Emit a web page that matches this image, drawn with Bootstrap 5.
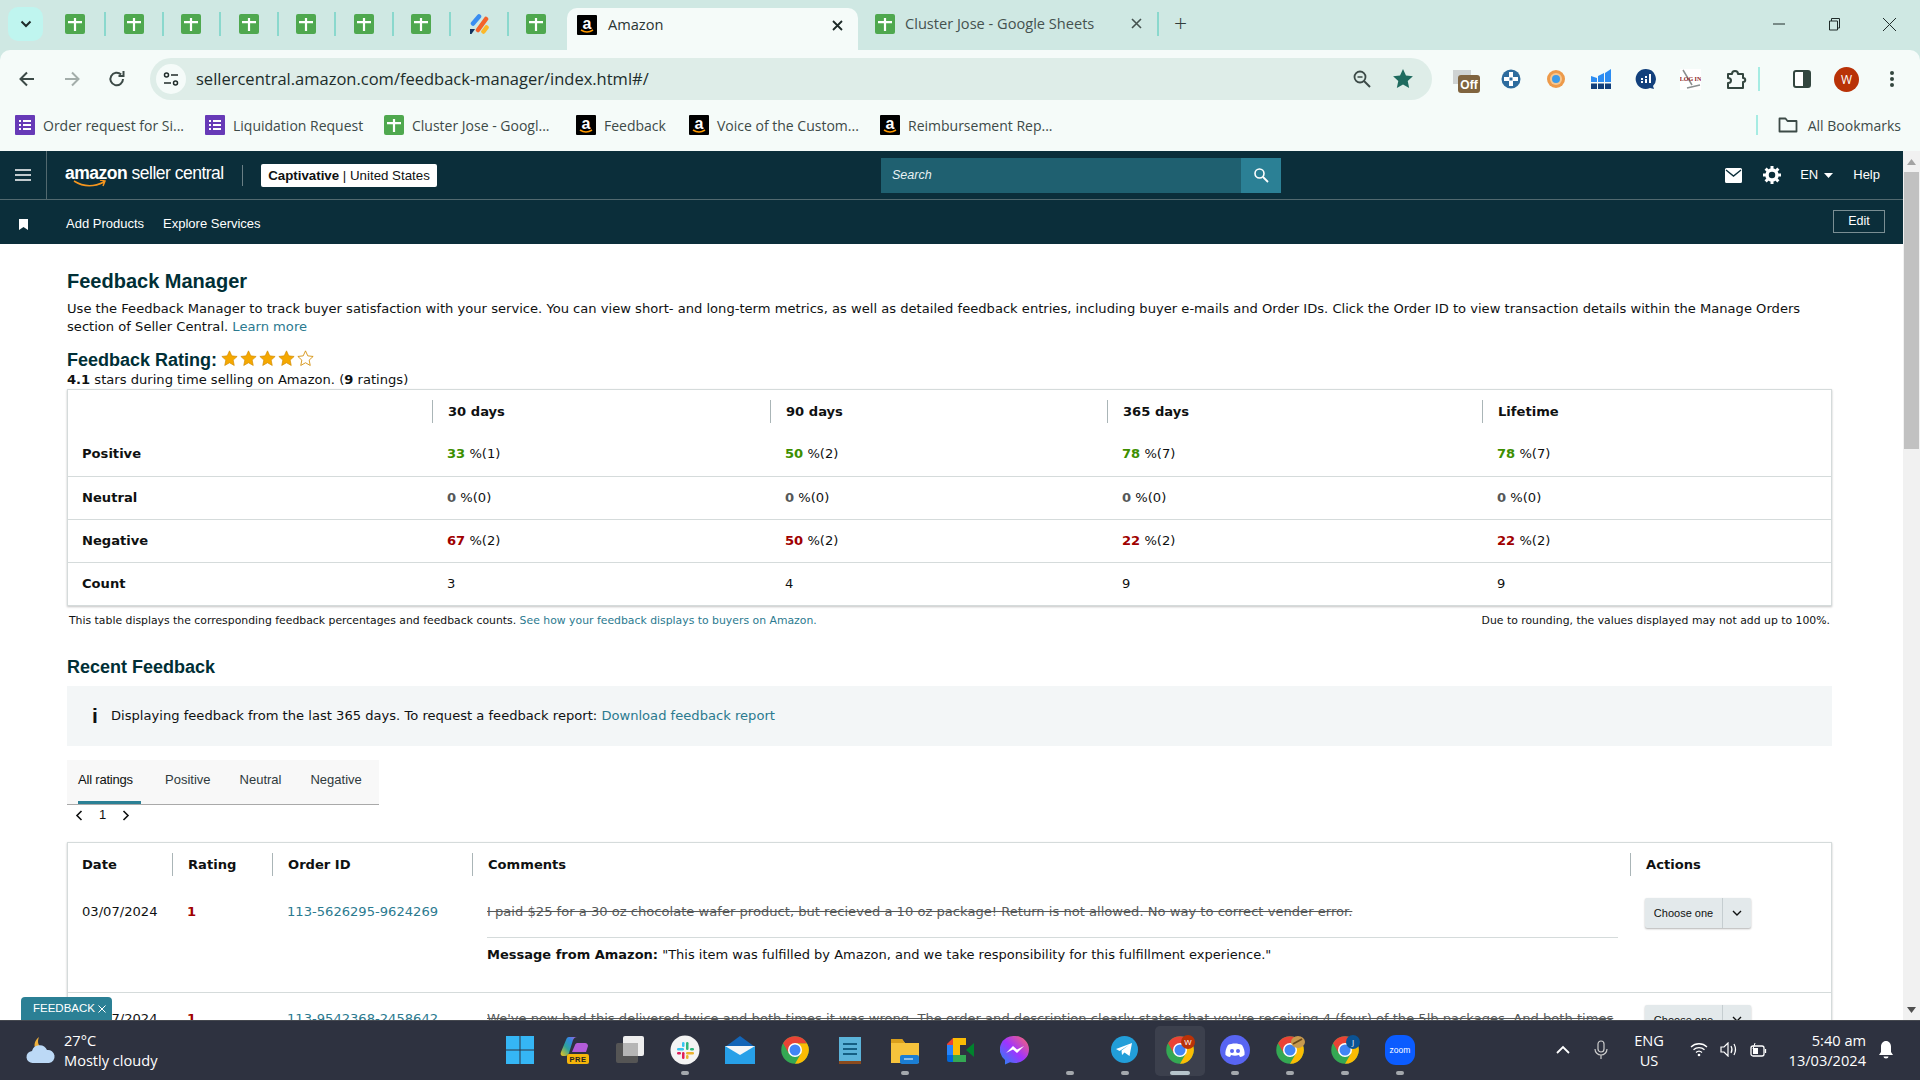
<!DOCTYPE html>
<html lang="en">
<head>
<meta charset="utf-8">
<title>Amazon</title>
<link href="https://cdn.jsdelivr.net/npm/bootstrap@5.3.0/dist/css/bootstrap.min.css" rel="stylesheet">
<style>
html,body{height:100%;margin:0;overflow:hidden}
body{font-family:"DejaVu Sans",sans-serif;font-size:13.1px;color:#0f1111;background:#fff}
.ui{font-family:"Open Sans","Noto Sans",sans-serif}
.shell{height:1080px;width:1920px;display:flex;flex-direction:column}
/* tab strip */
.tabstrip{height:50px;background:#cfe8e3;display:flex;align-items:center;flex:none}
.tabchev{width:35px;height:34px;margin-left:8px;margin-top:-2px;background:#bff5ef;border-radius:10px;display:flex;align-items:center;justify-content:center}
.pins{display:flex;margin-left:3.5px;margin-top:-2px}
.pin{width:57.5px;height:24px;display:flex;align-items:center;justify-content:center;position:relative}
.pin+.pin{border-left:2px solid #8ad8cd}
.acttab{width:291px;height:42px;margin-left:3px;margin-top:8px;background:#f5fbf9;border-radius:10px 10px 0 0;display:flex;align-items:center;padding:0 15px 8px 10px;font-size:14.6px;color:#2a3533}
.acttab span{flex:1;margin-left:11px}
.othertab{width:300px;display:flex;align-items:center;padding-left:17px;font-size:14.6px;color:#45524f;margin-top:-2px}
.othertab span{margin-left:10px;flex:1}
.tabsep{width:2px;height:24px;background:#8ad8cd;margin-top:-2px;margin-left:-1px}
.newtab{font-size:23px;line-height:1;margin-left:15px;margin-top:-4px;color:#303c3a;font-weight:300}
.winctl{margin-left:auto;display:flex;align-items:center;margin-top:-2px;padding-right:23px;gap:41px}
/* toolbar */
.toolbar{height:58px;background:#f5fbf9;display:flex;align-items:center;flex:none;border-radius:10px 10px 0 0;position:relative;padding-left:17px}
.chromebg{background:#cfe8e3;flex:none}
.tbtn{width:45px;display:flex;justify-content:flex-start}
.addr{width:1282px;height:42px;margin-left:-2px;background:#deede8;border-radius:21px;display:flex;align-items:center;padding:0 18px 0 6px}
.siteic{width:30px;height:30px;border-radius:50%;background:#f5fbf9;display:flex;align-items:center;justify-content:center}
.url{font-size:16.5px;margin-left:10px;color:#202c2a;flex:1}
.exts{display:flex;align-items:center;margin-left:11px}
.ext{width:45px;display:flex;justify-content:center;align-items:center}
.vsep{width:2px;height:24px;background:#a6ece3}
.panelx{margin-left:19px}
/* bookmarks */
.bmarks{height:43px;background:#f5fbf9;display:flex;align-items:center;padding:0 0 9px 15px;flex:none;font-size:14px;color:#3d4a48}
.bm{display:flex;align-items:center;gap:8px}
.bm1{width:190px}.bm2{width:179px}.bm3{width:192px}.bm4{width:113px}.bm5{width:191px}
.bmend{margin-left:auto;display:flex;align-items:center;padding-right:19px}
.bmend .vsep{height:20px;margin-right:20px}
.bmend svg{margin-right:10px}
/* page area: seller nav, content and the scrollbar that runs beside both */
.pagerow{flex:1;display:flex;min-height:0;overflow:hidden;position:relative}
.pagecol{flex:1;min-width:0;display:flex;flex-direction:column}
.snav1{height:49px;background:#0b2e3a;border-bottom:1px solid #52696f;display:flex;align-items:center;color:#fff;flex:none}
.snav2{height:44px;background:#0b2e3a;display:flex;align-items:center;color:#fff;flex:none;font-family:"Liberation Sans",Arial,sans-serif;font-size:13px;padding:3px 18px 0 0}
.burger{width:47px;height:48px;border-right:1px solid #52696f;display:flex;align-items:center;justify-content:center;flex:none;margin-right:18px}
.logo{position:relative;width:159px;font-family:"Liberation Sans",Arial,sans-serif;font-size:17.5px;line-height:22px;letter-spacing:-.5px;margin-top:-4px;white-space:nowrap}
.logo b{font-weight:700}
.smile{position:absolute;left:8px;top:18px}
.logosep{width:1px;height:21px;background:#6a7f85;margin:0 18px}
.acct{background:#fff;color:#0f1111;border-radius:2px;width:176px;height:23px;line-height:23px;text-align:center;font-family:"Liberation Sans",Arial,sans-serif;font-size:13.3px;white-space:nowrap}
.acct b{font-weight:700}
.srch{margin-left:444px;width:400px;height:35px;background:#1f6070;display:flex;align-items:center;padding-left:11px;font-family:"Liberation Sans",Arial,sans-serif;font-style:italic;font-size:12.5px;color:#e8f2f4}
.srch span{flex:1}
.srchbtn{width:40px;height:35px;background:#2b8095;display:flex;align-items:center;justify-content:center}
.navr{display:flex;align-items:center;margin-left:auto;font-family:"Liberation Sans",Arial,sans-serif;font-size:13px;padding-right:23px}
.gapmail{margin-right:21px}.gapgear{margin-right:19px}.gapcaret{margin:0 20px 0 6px}
.bmkic{width:66px;padding-left:19px;flex:none}
.gapadd{margin-right:19px}
.editb{margin-left:auto;width:52px;height:23px;margin-top:-4px;border:1px solid #7a8e93;line-height:21px;text-align:center;font-size:12.5px;color:#fff}
/* main */
.content{flex:1;min-height:0;padding:25px 71px 0 67px;overflow:hidden}
.sbar{width:17px;background:#f1f1f1;flex:none;display:flex;flex-direction:column;align-items:center}
.sthumb{width:15px;height:277px;background:#c1c1c1}
.sarr{height:21px;display:flex;align-items:center;justify-content:center;flex:none}
.sgap{flex:1}
.h1x{font-family:"Liberation Sans",Arial,sans-serif;font-weight:700;font-size:20px;line-height:24px;color:#002f36;margin:0 0 7px}
.lead-t{line-height:18px;margin:0 0 13px}
.lnk{color:#2b7a8f;text-decoration:none}
.h2x{font-family:"Liberation Sans",Arial,sans-serif;font-weight:700;font-size:18px;line-height:22px;color:#002f36;margin:0;display:flex;align-items:center;gap:4px}
.stars{display:flex;gap:2px;margin-top:-3px}
.subl{line-height:18px;margin:0}
.tbox{border:1px solid #d5dbdb;box-shadow:0 1px 2px rgba(15,17,17,.25);background:#fff}
table.ft{table-layout:fixed;width:100%;border-collapse:collapse;margin:0}
table.ft th,table.ft td{padding:0;border:0;vertical-align:middle}
table.ft tr+tr th,table.ft tr+tr td{border-top:1px solid #d5dbdb}
.rw{height:43px}
table.ft .cell{padding-left:15px}
table.ft .cell0{padding-left:14px}
.hd{display:block;border-left:1px solid #aab5b7;padding-left:15px;height:23px;line-height:23px;font-weight:700;color:#0f1111}
.w1{width:364px}.w2{width:338px}.w3{width:337px}.w4{width:375px}
.up{color:#3d8f00;font-weight:700}.dn{color:#a00000;font-weight:700}.zr{color:#565959;font-weight:700}
.foot{font-size:10.85px;line-height:16px;margin:7px 0 0;display:flex;justify-content:space-between;padding:0 2px}
.h2r{margin-top:27px}
.infob{height:60px;margin-top:8px;background:#f3f6f7;display:flex;align-items:center;padding-left:25px}
.infoi{font-family:"Liberation Sans",Arial,sans-serif;font-weight:700;font-size:21px;width:19px;color:#0f1111}
.rtabs{width:312px;height:45px;margin-top:14px;background:#f8f8f8;border-bottom:1px solid #a9a9a9;display:flex;font-family:"Liberation Sans",Arial,sans-serif;font-size:13px;color:#2f3a3c;padding-left:11px;gap:29px}
.rtab{height:44px;line-height:39px}
.rtab.on{border-bottom:3px solid #2b8095;color:#0f1111;letter-spacing:-.2px;width:63px;margin-right:-5px;white-space:nowrap}
.pgn{height:20px;display:flex;align-items:center;padding-left:8px;font-family:"Liberation Sans",Arial,sans-serif;font-size:13px;gap:12px}
.tbl2{margin-top:17px}
.c1{width:104px}.c2{width:100px}.c3{width:200px}.c4{width:1158px}
.r0{height:43px}
.r1{height:106px}
table.ft td.top{vertical-align:top;padding-top:17px}
.tdl{line-height:18px;display:block}
.strk{text-decoration:line-through;color:#565959;line-height:18px;padding-right:12px;white-space:nowrap;overflow:hidden}
.ruled{border-top:1px solid #d5dbdb;margin:16px 12px 0 0;padding-top:8px;line-height:18px;font-size:13px}
.ddn{margin-top:-5px;width:106px;height:30px;background:#e3e9eb;box-shadow:0 1px 2px rgba(0,0,0,.3);border-radius:2px;display:flex;font-family:"Liberation Sans",Arial,sans-serif;font-size:11px;color:#0f1111}
.ddn span{width:78px;line-height:30px;text-align:center;border-right:1px solid #c5cdd0}
.ddn i{flex:1;display:flex;align-items:center;justify-content:center}
.fbk{position:absolute;left:21px;bottom:0;width:91px;height:23px;background:#2b8095;color:#fff;border-radius:4px 4px 0 0;font-family:"Liberation Sans",Arial,sans-serif;font-size:11.5px;line-height:23px;padding-left:12px}
/* taskbar */
.tbar{height:60px;background:#2e3240;border-top:1px solid #45484f;flex:none;display:flex;align-items:center;color:#fff;position:relative;font-size:14.6px}
.wth{display:flex;align-items:center;width:492px;padding:0 0 2px 25px;gap:7px;line-height:20px}
.tcell{width:55px;height:50px;display:flex;align-items:center;justify-content:center;position:relative;flex:none}
.tcell>svg{margin-top:-2px}
.tcell.dot::after{content:"";position:absolute;bottom:1px;left:50%;margin-left:-4px;width:8px;height:4px;border-radius:2px;background:#a4a8ad}
.tcell.act{width:50px;margin:0 2.5px;background:#3c404d;border-radius:5px}
.tcell.act::after{width:20px;margin-left:-10px;background:#b7c4cc}
.tray{margin-left:auto;display:flex;align-items:center;padding:0 26px 2px 0}
.lang{text-align:center;line-height:20px;width:50px}
.gapvol{margin-left:12px}
.clock{text-align:right;line-height:20px;width:90px;margin-left:9px}
.gapbell{margin-left:12px}
</style>
</head>
<body>
<svg width="0" height="0" class="d-none" aria-hidden="true">
<defs>
<symbol id="sheet" viewBox="0 0 20 20"><rect width="20" height="20" rx="2" fill="#4fa84f"/><path d="M3 7h14v2.2H3zM8.900 4h2.200v13H8.900z" fill="#fff"/></symbol>
<symbol id="form" viewBox="0 0 20 20"><rect width="20" height="20" rx="1" fill="#673ab7"/><path d="M4 5h2v2H4zM8 5h8v2H8zM4 9h2v2H4zM8 9h8v2H8zM4 13h2v2H4zM8 13h8v2H8z" fill="#fff"/></symbol>
<symbol id="amz" viewBox="0 0 20 20"><rect width="20" height="20" rx="1" fill="#000"/><text x="10" y="13.5" text-anchor="middle" font-family="Liberation Sans" font-weight="700" font-size="16" fill="#fff">a</text><path d="M4 15q6 4 12 0" stroke="#f90" stroke-width="1.6" fill="none"/></symbol>
<symbol id="jira" viewBox="0 0 20 20"><path d="M10 2.500 4 9.500" stroke="#3a8df0" stroke-width="4.500" stroke-linecap="round"/><path d="M17 5 9 16" stroke="#f4622a" stroke-width="4.500" stroke-linecap="round"/><path d="M17.500 13.500 14.500 17.500" stroke="#fbb829" stroke-width="4.500" stroke-linecap="round"/><path d="M1 15h5l-3.500 5H1z" fill="#12315c"/></symbol>
<symbol id="chrome" viewBox="0 0 24 24"><circle cx="12" cy="12" r="11" fill="#34a853"/><path d="M21.53 6.5A11 11 0 0 1 12 23l4.8-8.3L12 6.5z" fill="#fbbc04"/><path d="M12 1a11 11 0 0 1 9.53 5.5H12L7.2 14.7 2.47 6.5A11 11 0 0 1 12 1z" fill="#ea4335"/><circle cx="12" cy="12" r="5.6" fill="#fff"/><circle cx="12" cy="12" r="4.4" fill="#4285f4"/></symbol>
<symbol id="star" viewBox="0 0 20 20"><path d="M10 1l2.700 5.900 6.300.7-4.700 4.300 1.300 6.300L10 15l-5.600 3.200 1.300-6.300L1 7.600l6.300-.7z" fill="#f5a800" stroke="#d18a00" stroke-width=".8"/></symbol>
<symbol id="stare" viewBox="0 0 20 20"><path d="M10 1l2.700 5.900 6.300.7-4.700 4.300 1.300 6.300L10 15l-5.600 3.200 1.300-6.300L1 7.600l6.300-.7z" fill="#fff" stroke="#d18a00" stroke-width="1"/></symbol>
</defs>
</svg>
<div class="shell">
  <div class="tabstrip ui">
    <div class="tabchev"><svg width="12" height="8" viewBox="0 0 12 8"><path d="M1.500 1.500 6 6l4.500-4.500" fill="none" stroke="#1d2a28" stroke-width="2"/></svg></div>
    <div class="pins">
      <div class="pin"><svg width="20" height="20"><use href="#sheet"/></svg></div>
      <div class="pin"><svg width="20" height="20"><use href="#sheet"/></svg></div>
      <div class="pin"><svg width="20" height="20"><use href="#sheet"/></svg></div>
      <div class="pin"><svg width="20" height="20"><use href="#sheet"/></svg></div>
      <div class="pin"><svg width="20" height="20"><use href="#sheet"/></svg></div>
      <div class="pin"><svg width="20" height="20"><use href="#sheet"/></svg></div>
      <div class="pin"><svg width="20" height="20"><use href="#sheet"/></svg></div>
      <div class="pin"><svg width="20" height="20"><use href="#jira"/></svg></div>
      <div class="pin"><svg width="20" height="20"><use href="#sheet"/></svg></div>
    </div>
    <div class="acttab"><svg width="20" height="20"><use href="#amz"/></svg><span>Amazon</span><svg width="11" height="11" viewBox="0 0 11 11"><path d="M1 1l9 9M10 1l-9 9" stroke="#1d2a28" stroke-width="1.800"/></svg></div>
    <div class="othertab"><svg width="20" height="20"><use href="#sheet"/></svg><span>Cluster Jose - Google Sheets</span><svg width="11" height="11" viewBox="0 0 11 11" class="me-3"><path d="M1 1l9 9M10 1l-9 9" stroke="#45524f" stroke-width="1.600"/></svg></div>
    <div class="tabsep"></div>
    <div class="newtab">+</div>
    <div class="winctl">
      <svg width="14" height="14" viewBox="0 0 14 14"><path d="M1 7h12" stroke="#202c2a" stroke-width="1"/></svg>
      <svg width="14" height="14" viewBox="0 0 14 14"><path d="M2.500 4h8v9h-8zM4.500 4V1.500h8V11h-2" fill="none" stroke="#202c2a"/></svg>
      <svg width="15" height="15" viewBox="0 0 15 15"><path d="M1 1l13 13M14 1 1 14" stroke="#202c2a"/></svg>
    </div>
  </div>
  <div class="chromebg"><div class="toolbar ui">
    <div class="tbtn"><svg width="20" height="20" viewBox="0 0 20 20"><path d="M17 10H4M10 3.500 3.500 10l6.500 6.500" fill="none" stroke="#3c4a47" stroke-width="2"/></svg></div>
    <div class="tbtn"><svg width="20" height="20" viewBox="0 0 20 20"><path d="M3 10h13M10 3.500 16.500 10 10 16.500" fill="none" stroke="#a3adaa" stroke-width="2"/></svg></div>
    <div class="tbtn"><svg width="20" height="20" viewBox="0 0 20 20"><path d="M16 10a6.300 6.300 0 1 1-1.900-4.500M16.500 2v5h-5" fill="none" stroke="#3c4a47" stroke-width="2"/></svg></div>
    <div class="addr">
      <div class="siteic"><svg width="16" height="16" viewBox="0 0 16 16"><circle cx="3.500" cy="4" r="2" fill="none" stroke="#202c2a" stroke-width="1.500"/><path d="M8 4h7M1 12h7" stroke="#202c2a" stroke-width="1.500"/><circle cx="12.500" cy="12" r="2" fill="none" stroke="#202c2a" stroke-width="1.500"/></svg></div>
      <div class="url">sellercentral.amazon.com/feedback-manager/index.html#/</div>
      <svg width="20" height="20" viewBox="0 0 20 20" class="me-3"><circle cx="8" cy="8" r="5.500" fill="none" stroke="#3c4a47" stroke-width="1.800"/><path d="M12 12l6 6" stroke="#3c4a47" stroke-width="2"/><path d="M5.500 8h5" stroke="#3c4a47" stroke-width="1.500"/></svg>
      <svg width="22" height="22" viewBox="0 0 20 20" class="ms-1"><path d="M10 1l2.700 5.900 6.300.7-4.700 4.300 1.300 6.300L10 15l-5.600 3.200 1.300-6.300L1 7.600l6.300-.7z" fill="#1f6b5f"/></svg>
    </div>
    <div class="exts">
      <div class="ext"><svg width="30" height="30" viewBox="0 0 30 30"><path d="M2 6h18v14H2z" fill="#cfd3d3"/><rect x="7" y="11" width="22" height="18" rx="3" fill="#80643f"/><text x="18" y="25" text-anchor="middle" font-family="Liberation Sans" font-weight="700" font-size="12" fill="#fff">Off</text></svg></div>
      <div class="ext"><svg width="20" height="20" viewBox="0 0 20 20"><circle cx="10" cy="10" r="9.500" fill="#2d6c9e"/><path d="M8 3h4v5h5v4h-5v5H8v-5H3V8h5z" fill="#fff"/><rect x="8.500" y="8.500" width="3" height="3" fill="#2d6c9e"/></svg></div>
      <div class="ext"><svg width="20" height="20" viewBox="0 0 20 20"><circle cx="10" cy="10" r="9" fill="#ed9a4a"/><circle cx="10" cy="10" r="6" fill="#f6c68f"/><circle cx="10" cy="10" r="4" fill="#3d9be8"/></svg></div>
      <div class="ext"><svg width="22" height="22" viewBox="0 0 22 22"><path d="M1 8l6 2v4H1zM8 8l6-3v9H8zM15 5l6-4v13h-6z" fill="#2c8cf2"/><path d="M1 15.500h6V21H1zM8 15.500h6V21H8zM15 15.500h6V21h-6z" fill="#12407c"/></svg></div>
      <div class="ext"><svg width="22" height="22" viewBox="0 0 22 22"><path d="M11 1a10 10 0 1 0 4 19l4 1-1-3A10 10 0 0 0 11 1z" fill="#12407c"/><path d="M6 10h2v2H6zM6 13h2v2H6zM10 8h2v2h-2zM10 11h2v4h-2zM14 6h2v9h-2z" fill="#fff"/></svg></div>
      <div class="ext"><svg width="21" height="21" viewBox="0 0 21 21"><rect width="21" height="21" fill="#fff"/><path d="M3 1l9 15M7 19l13-3" stroke="#8a8f90" stroke-width="1.500"/><text x="10.500" y="12" text-anchor="middle" font-family="Liberation Serif" font-weight="700" font-size="6" fill="#8c1a1a">LOG IN</text></svg></div>
      <div class="ext"><svg width="22" height="22" viewBox="0 0 22 22"><path d="M3 6h4c0-4 6-4 6 0h5v4c3 0 3 4 0 4v6H3v-5c2 0 3-1 3-2.500S5 10 3 10z" fill="none" stroke="#33463f" stroke-width="2" stroke-linejoin="round"/></svg></div>
      <div class="vsep"></div>
      <div class="ext panelx"><svg width="18" height="18" viewBox="0 0 18 18"><rect x="1" y="1" width="16" height="16" rx="2" fill="#fff" stroke="#33463f" stroke-width="2"/><rect x="10" y="1" width="7" height="16" fill="#33463f"/></svg></div>
      <div class="ext"><svg width="25" height="25" viewBox="0 0 25 25"><circle cx="12.500" cy="12.500" r="12.500" fill="#b93207"/><text x="12.500" y="17" text-anchor="middle" font-family="Open Sans" font-size="12" fill="#fff">W</text></svg></div>
      <div class="ext"><svg width="4" height="16" viewBox="0 0 4 16"><circle cx="2" cy="2" r="2" fill="#33463f"/><circle cx="2" cy="8" r="2" fill="#33463f"/><circle cx="2" cy="14" r="2" fill="#33463f"/></svg></div>
    </div>
  </div></div>
  <div class="bmarks ui">
    <div class="bm bm1"><svg width="20" height="20"><use href="#form"/></svg>Order request for Si...</div>
    <div class="bm bm2"><svg width="20" height="20"><use href="#form"/></svg>Liquidation Request</div>
    <div class="bm bm3"><svg width="20" height="20"><use href="#sheet"/></svg>Cluster Jose - Googl...</div>
    <div class="bm bm4"><svg width="20" height="20"><use href="#amz"/></svg>Feedback</div>
    <div class="bm bm5"><svg width="20" height="20"><use href="#amz"/></svg>Voice of the Custom...</div>
    <div class="bm"><svg width="20" height="20"><use href="#amz"/></svg>Reimbursement Rep...</div>
    <div class="bmend"><div class="vsep"></div><svg width="20" height="18" viewBox="0 0 20 18"><path d="M1.500 15.500V2.500h6l2 2.500h9v10.500z" fill="none" stroke="#3c4a47" stroke-width="1.800" stroke-linejoin="round"/></svg>All Bookmarks</div>
  </div>
  <div class="pagerow">
    <div class="pagecol">
      <div class="snav1">
        <div class="burger"><svg width="16" height="12" viewBox="0 0 16 12"><path d="M0 1h16M0 6h16M0 11h16" stroke="#fff" stroke-width="1.600"/></svg></div>
        <div class="logo"><b>amazon</b> seller central<svg class="smile" width="34" height="9" viewBox="0 0 34 9"><path d="M1 1q14 9 30 1M27 0l5 1-2 5" fill="none" stroke="#f5961e" stroke-width="1.500"/></svg></div>
        <div class="logosep"></div>
        <div class="acct"><b>Captivative</b> | United States</div>
        <div class="srch"><span>Search</span><div class="srchbtn"><svg width="16" height="16" viewBox="0 0 16 16"><circle cx="6.500" cy="6.500" r="4.500" fill="none" stroke="#fff" stroke-width="1.600"/><path d="M10 10l5 5" stroke="#fff" stroke-width="1.800"/></svg></div></div>
        <div class="navr">
          <svg width="17" height="15" viewBox="0 0 17 15" class="gapmail"><path d="M0 1.500A1.500 1.500 0 0 1 1.500 0h14A1.500 1.500 0 0 1 17 1.500v12a1.500 1.500 0 0 1-1.500 1.500h-14A1.500 1.500 0 0 1 0 13.500z" fill="#fff"/><path d="M1 2l7.500 6L16 2" fill="none" stroke="#0b2e3a" stroke-width="1.400"/></svg>
          <svg width="18" height="18" viewBox="0 0 18 18" class="gapgear"><circle cx="9" cy="9" r="5" fill="none" stroke="#fff" stroke-width="3.500"/><path d="M9 0v3M9 15v3M0 9h3M15 9h3M2.600 2.600l2.200 2.200M13.200 13.200l2.200 2.200M15.400 2.600l-2.200 2.200M4.800 13.200l-2.200 2.200" stroke="#fff" stroke-width="3"/></svg>
          <span>EN</span><svg width="9" height="5" viewBox="0 0 9 5" class="gapcaret"><path d="M0 0h9L4.500 5z" fill="#fff"/></svg>
          <span>Help</span>
        </div>
      </div>
      <div class="snav2">
        <div class="bmkic"><svg width="9" height="11" viewBox="0 0 9 11"><path d="M0 0h9v11L4.500 8 0 11z" fill="#fff"/></svg></div>
        <span class="gapadd">Add Products</span><span>Explore Services</span>
        <div class="editb">Edit</div>
      </div>
      <div class="content">
        <h1 class="h1x">Feedback Manager</h1>
        <p class="lead-t">Use the Feedback Manager to track buyer satisfaction with your service. You can view short- and long-term metrics, as well as detailed feedback entries, including buyer e-mails and Order IDs. Click the Order ID to view transaction details within the Manage Orders section of Seller Central. <a class="lnk" href="#">Learn more</a></p>
        <h2 class="h2x">Feedback Rating: <span class="stars"><svg width="17" height="17"><use href="#star"/></svg><svg width="17" height="17"><use href="#star"/></svg><svg width="17" height="17"><use href="#star"/></svg><svg width="17" height="17"><use href="#star"/></svg><svg width="17" height="17"><use href="#stare"/></svg></span></h2>
        <p class="subl"><b>4.1</b> stars during time selling on Amazon. (<b>9</b> ratings)</p>
        <div class="tbox">
          <table class="ft">
            <thead><tr class="rw"><th class="w1"></th><th class="w2"><span class="hd">30 days</span></th><th class="w3"><span class="hd">90 days</span></th><th class="w4"><span class="hd">365 days</span></th><th><span class="hd">Lifetime</span></th></tr></thead>
            <tbody>
              <tr class="rw"><td class="cell0 fw-bold">Positive</td><td class="cell"><span class="up">33</span> %(1)</td><td class="cell"><span class="up">50</span> %(2)</td><td class="cell"><span class="up">78</span> %(7)</td><td class="cell"><span class="up">78</span> %(7)</td></tr>
              <tr class="rw"><td class="cell0 fw-bold">Neutral</td><td class="cell"><span class="zr">0</span> %(0)</td><td class="cell"><span class="zr">0</span> %(0)</td><td class="cell"><span class="zr">0</span> %(0)</td><td class="cell"><span class="zr">0</span> %(0)</td></tr>
              <tr class="rw"><td class="cell0 fw-bold">Negative</td><td class="cell"><span class="dn">67</span> %(2)</td><td class="cell"><span class="dn">50</span> %(2)</td><td class="cell"><span class="dn">22</span> %(2)</td><td class="cell"><span class="dn">22</span> %(2)</td></tr>
              <tr class="rw"><td class="cell0 fw-bold">Count</td><td class="cell">3</td><td class="cell">4</td><td class="cell">9</td><td class="cell">9</td></tr>
            </tbody>
          </table>
        </div>
        <div class="foot"><span>This table displays the corresponding feedback percentages and feedback counts. <a class="lnk" href="#">See how your feedback displays to buyers on Amazon.</a></span><span>Due to rounding, the values displayed may not add up to 100%.</span></div>
        <h2 class="h2x h2r">Recent Feedback</h2>
        <div class="infob"><span class="infoi">i</span><span>Displaying feedback from the last 365 days. To request a feedback report: <a class="lnk" href="#">Download feedback report</a></span></div>
        <div class="rtabs"><div class="rtab on">All ratings</div><div class="rtab">Positive</div><div class="rtab">Neutral</div><div class="rtab">Negative</div></div>
        <div class="pgn"><svg width="8" height="11" viewBox="0 0 8 11"><path d="M6.500 1 2 5.500 6.500 10" fill="none" stroke="#0f1111" stroke-width="1.600"/></svg><span class="px-1">1</span><svg width="8" height="11" viewBox="0 0 8 11"><path d="M1.500 1 6 5.500 1.500 10" fill="none" stroke="#0f1111" stroke-width="1.600"/></svg></div>
        <div class="tbox tbl2">
          <table class="ft">
            <thead><tr class="r0"><th class="c1 cell0 fw-bold">Date</th><th class="c2"><span class="hd">Rating</span></th><th class="c3"><span class="hd">Order ID</span></th><th class="c4"><span class="hd">Comments</span></th><th><span class="hd">Actions</span></th></tr></thead>
            <tbody>
              <tr class="r1">
                <td class="cell0 top"><span class="tdl">03/07/2024</span></td>
                <td class="cell top"><span class="tdl dn">1</span></td>
                <td class="cell top"><a class="lnk tdl" href="#">113-5626295-9624269</a></td>
                <td class="cell top"><div class="strk">I paid $25 for a 30 oz chocolate wafer product, but recieved a 10 oz package! Return is not allowed. No way to correct vender error.</div><div class="ruled"><b>Message from Amazon:</b> "This item was fulfilled by Amazon, and we take responsibility for this fulfillment experience."</div></td>
                <td class="cell top"><div class="ddn"><span>Choose one</span><i><svg width="10" height="7" viewBox="0 0 10 7"><path d="M1 1l4 4 4-4" fill="none" stroke="#0f1111" stroke-width="1.400"/></svg></i></div></td>
              </tr>
              <tr class="r1">
                <td class="cell0 top"><span class="tdl">03/07/2024</span></td>
                <td class="cell top"><span class="tdl dn">1</span></td>
                <td class="cell top"><a class="lnk tdl" href="#">113-9542368-2458642</a></td>
                <td class="cell top"><div class="strk">We've now had this delivered twice and both times it was wrong. The order and description clearly states that you're receiving 4 (four) of the 5lb packages. And both times</div></td>
                <td class="cell top"><div class="ddn"><span>Choose one</span><i><svg width="10" height="7" viewBox="0 0 10 7"><path d="M1 1l4 4 4-4" fill="none" stroke="#0f1111" stroke-width="1.400"/></svg></i></div></td>
              </tr>
            </tbody>
          </table>
        </div>
      </div>
    </div>
    <div class="sbar">
      <div class="sarr"><svg width="9" height="6" viewBox="0 0 9 6"><path d="M4.500 0 9 6H0z" fill="#a3a3a3"/></svg></div>
      <div class="sthumb"></div>
      <div class="sgap"></div>
      <div class="sarr"><svg width="9" height="6" viewBox="0 0 9 6"><path d="M0 0h9L4.500 6z" fill="#505050"/></svg></div>
    </div>
    <div class="fbk">FEEDBACK <svg width="8" height="8" viewBox="0 0 8 8"><path d="M.5.500l7 7M7.500.500l-7 7" stroke="#fff"/></svg></div>
  </div>
  <div class="tbar ui">
    <div class="wth">
      <svg width="32" height="32" viewBox="0 0 32 32"><path d="M14 3c-5 4-6 10-2 13l6-2C13 12 12 8 14 3z" fill="#f0b13c"/><path d="M8 29a6 6 0 0 1-1-12 8 8 0 0 1 15-1 6.500 6.500 0 0 1 2 13z" fill="#bcd9f6"/></svg>
      <div><div>27°C</div><div>Mostly cloudy</div></div>
    </div>
    <div class="tcell"><svg width="30" height="30" viewBox="0 0 30 30"><path d="M1 1h13.500v13.500H1zM15.500 1H29v13.500H15.500zM1 15.500h13.500V29H1zM15.500 15.500H29V29H15.500z" fill="#35b6f5"/></svg></div>
    <div class="tcell"><svg width="30" height="30" viewBox="0 0 30 30"><defs><linearGradient id="cop" x1="0" y1="1" x2="1" y2="0"><stop offset="0" stop-color="#f5c518"/><stop offset=".4" stop-color="#2fa39a"/><stop offset=".7" stop-color="#2f8be0"/><stop offset="1" stop-color="#b35cd8"/></linearGradient></defs><path d="M9 2h8c-2 0-3 1-4 3l-4 13c-1 2-2 3-4 3H3C1 21 0 19 1 17L6 5c.6-2 1.500-3 3-3z" fill="url(#cop)"/><path d="M18 8h7c2 0 3 1.500 3 3l-2 6H12l3-7c.6-1.500 1.500-2 3-2z" fill="#b35cd8"/><rect x="7" y="19" width="22" height="10" rx="2" fill="#f5b50a"/><text x="18" y="27" text-anchor="middle" font-family="Liberation Sans" font-weight="700" font-size="7.500" fill="#222" letter-spacing=".5">PRE</text></svg></div>
    <div class="tcell"><svg width="30" height="30" viewBox="0 0 30 30"><rect x="1" y="8" width="22" height="20" rx="2" fill="#555"/><rect x="8" y="1" width="21" height="20" rx="2" fill="#eee"/><rect x="8" y="8" width="15" height="13" fill="#b5b5b5"/></svg></div>
    <div class="tcell dot"><svg width="30" height="30" viewBox="0 0 30 30"><circle cx="15" cy="15" r="14.500" fill="#f4f4f4"/><rect x="7" y="13" width="7" height="2.500" rx="1.200" fill="#36c5f0"/><rect x="12" y="7" width="2.500" height="5" rx="1.200" fill="#36c5f0"/><rect x="16" y="7" width="2.500" height="8" rx="1.200" fill="#2eb67d"/><rect x="20" y="13" width="4" height="2.500" rx="1.200" fill="#2eb67d"/><rect x="16" y="17" width="8" height="2.500" rx="1.200" fill="#ecb22e"/><rect x="16" y="20" width="2.500" height="4" rx="1.200" fill="#ecb22e"/><rect x="12" y="17" width="2.500" height="7" rx="1.200" fill="#e01e5a"/><rect x="7" y="17" width="4" height="2.500" rx="1.200" fill="#e01e5a"/></svg></div>
    <div class="tcell"><svg width="30" height="30" viewBox="0 0 30 30"><path d="M0 12 15 1l15 11z" fill="#1265b8"/><path d="M0 11h30v18H0z" fill="#27a0e8"/><path d="M0 11 15 20l15-9z" fill="#f3f6f8"/></svg></div>
    <div class="tcell"><svg width="30" height="30"><use href="#chrome"/></svg></div>
    <div class="tcell"><svg width="30" height="30" viewBox="0 0 30 30"><rect x="4" y="2" width="22" height="26" fill="#5bb3d9"/><rect x="4" y="26" width="22" height="3" fill="#8a4a1e"/><path d="M8 9h14M8 14h14M8 19h14" stroke="#155f83" stroke-width="2"/></svg></div>
    <div class="tcell dot"><svg width="30" height="30" viewBox="0 0 30 30"><path d="M1 4h11l3 4h14v20H1z" fill="#f6c33c"/><path d="M1 4h11l3 4H1z" fill="#d99f1c"/><rect x="10" y="20" width="19" height="9" rx="2" fill="#1b7ed4"/><path d="M14 24h9" stroke="#fff"/></svg></div>
    <div class="tcell"><svg width="30" height="30" viewBox="0 0 30 30"><path d="M8 3h13v7h-6v10h6v7H8z" fill="#fbbc04"/><path d="M2 9 8 3v7H2z" fill="#ea4335"/><path d="M2 10h6v10H2z" fill="#2684fc"/><path d="M2 20h6v7H4a2 2 0 0 1-2-2z" fill="#0066da"/><path d="M8 20h13v7H8z" fill="#34a853"/><path d="M21 15l8-7v14z" fill="#00832d"/></svg></div>
    <div class="tcell"><svg width="30" height="30" viewBox="0 0 30 30"><defs><linearGradient id="msg" x1="0" y1="1" x2="1" y2="0"><stop offset="0" stop-color="#1c8cf5"/><stop offset=".5" stop-color="#a033ff"/><stop offset="1" stop-color="#ff6968"/></linearGradient></defs><path d="M15 1a14 13.500 0 0 1 0 27c-1.800 0-3.500-.3-5-.8L5 29.500V25A13.500 13.500 0 0 1 15 1z" fill="url(#msg)"/><path d="M6 18l7-7 4 3.500L24 11l-7 7-4-3.500z" fill="#fff"/></svg></div>
    <div class="tcell dot"></div>
    <div class="tcell dot"><svg width="27" height="27" viewBox="0 0 27 27"><circle cx="13.500" cy="13.500" r="13.500" fill="#229ed9"/><path d="M5 13 21 7l-2.500 13-5-3.500-2.500 2.500-.5-4.500L18 9l-9.500 6z" fill="#fff"/></svg></div>
    <div class="tcell dot act"><svg width="30" height="30" viewBox="0 0 30 30"><svg width="30" height="30" viewBox="0 0 24 24"><use href="#chrome"/></svg><circle cx="23" cy="7" r="7" fill="#b93207"/><text x="23" y="10" text-anchor="middle" font-family="Open Sans" font-size="8" fill="#fff">W</text></svg></div>
    <div class="tcell dot"><svg width="30" height="30" viewBox="0 0 30 30"><circle cx="15" cy="15" r="15" fill="#5865f2"/><path d="M8 10c4-2 10-2 14 0 2 3 3 7 2.500 10-1.500 1-3 2-4.500 2l-1-2c-3 1-5 1-8 0l-1 2c-1.500 0-3-1-4.500-2C5 17 6 13 8 10z" fill="#fff"/><circle cx="12" cy="16" r="2" fill="#5865f2"/><circle cx="18" cy="16" r="2" fill="#5865f2"/></svg></div>
    <div class="tcell dot"><svg width="30" height="30" viewBox="0 0 30 30"><svg width="30" height="30" viewBox="0 0 24 24"><use href="#chrome"/></svg><ellipse cx="23" cy="7" rx="7" ry="6" fill="#c79a4e"/><path d="M18 9l9-5" stroke="#6b4a1c" stroke-width="2"/></svg></div>
    <div class="tcell dot"><svg width="30" height="30" viewBox="0 0 30 30"><svg width="30" height="30" viewBox="0 0 24 24"><use href="#chrome"/></svg><circle cx="23" cy="7" r="7" fill="#0b5394"/><text x="23" y="10" text-anchor="middle" font-family="Open Sans" font-size="8" fill="#fff">J</text></svg></div>
    <div class="tcell dot"><svg width="30" height="30" viewBox="0 0 30 30"><rect width="30" height="30" rx="11" fill="#0b5cff"/><text x="15" y="18" text-anchor="middle" font-family="Liberation Sans" font-size="8.500" fill="#fff">zoom</text></svg></div>
    <div class="tray">
      <svg width="14" height="9" viewBox="0 0 14 9" class="me-4"><path d="M1 8l6-6 6 6" fill="none" stroke="#fff" stroke-width="1.800"/></svg>
      <svg width="14" height="20" viewBox="0 0 14 20"><rect x="4" y="1" width="6" height="11" rx="3" fill="none" stroke="#ccc" stroke-width="1.200"/><path d="M1 9a6 6 0 0 0 12 0M7 15v4" fill="none" stroke="#ccc" stroke-width="1.200"/></svg>
      <div class="lang ms-3">ENG<br>US</div>
      <svg width="18" height="15" viewBox="0 0 18 15" class="ms-3"><path d="M1 5a11.500 11.500 0 0 1 16 0M3.500 7.800a8 8 0 0 1 11 0M6 10.500a4.500 4.500 0 0 1 6 0" fill="none" stroke="#fff" stroke-width="1.300"/><circle cx="9" cy="13" r="1.300" fill="#fff"/></svg>
      <svg width="18" height="15" viewBox="0 0 18 15" class="gapvol"><path d="M1 5h3l4-4v13l-4-4H1z" fill="none" stroke="#fff" stroke-width="1.200"/><path d="M11 4q2 3.500 0 7M14 2q3 5.500 0 11" fill="none" stroke="#fff" stroke-width="1.200"/></svg>
      <svg width="17" height="16" viewBox="0 0 17 16" class="gapvol"><rect x="1" y="4" width="13" height="10" rx="2" fill="none" stroke="#fff" stroke-width="1.300"/><path d="M15.500 7v4" stroke="#fff" stroke-width="1.300"/><path d="M3 6h5v6H3z" fill="#fff"/><path d="M5 1l-2 6" stroke="#fff"/></svg>
      <div class="clock">5:40 am<br>13/03/2024</div>
      <svg width="16" height="19" viewBox="0 0 16 19" class="gapbell"><path d="M8 1c-3 0-5 2.500-5 5.500V12l-2 3h14l-2-3V6.500C13 3.500 11 1 8 1z" fill="#fff"/><path d="M5.500 16.500a2.500 2 0 0 0 5 0z" fill="#fff"/></svg>
    </div>
  </div>
</div>
</body>
</html>
